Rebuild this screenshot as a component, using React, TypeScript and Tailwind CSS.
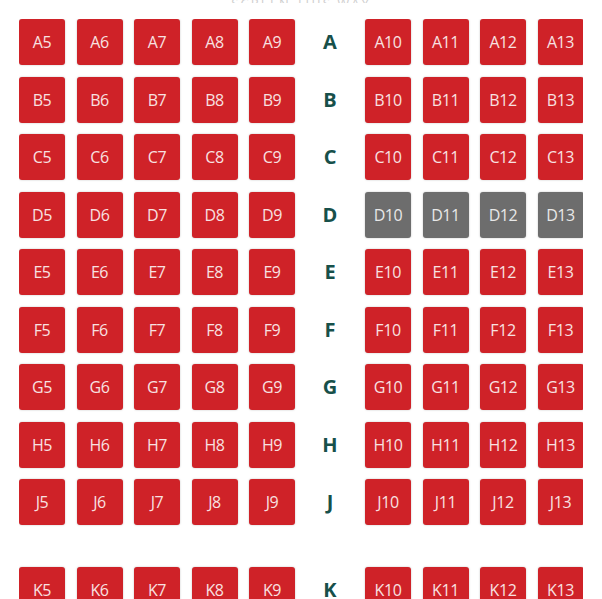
import React from "react";

const rows = ["A", "B", "C", "D", "E", "F", "G", "H", "J"];
const leftCols = [5, 6, 7, 8, 9];
const rightCols = [10, 11, 12, 13];

const taken = ["D10", "D11", "D12", "D13"];

const Seat = ({ id }: { id: string }) => {
  const isTaken = taken.includes(id);
  return (
    <button
      className={`w-[46px] h-[46px] shrink-0 rounded-[3px] flex items-center justify-center text-[16px] font-medium tracking-tight shadow-[0_0_2px_rgba(0,0,0,0.25)] ${
        isTaken ? "bg-[#6d6d6d] text-[#e8e8e8]" : "bg-[#cf2228] text-[#f8e1e1]"
      }`}
    >
      {id}
    </button>
  );
};

const Row = ({ letter }: { letter: string }) => (
  <div className="flex gap-[11.5px] items-center">
    {leftCols.map((n) => (
      <Seat key={n} id={`${letter}${n}`} />
    ))}
    <div className="w-[47px] shrink-0 text-center text-[20px] font-bold text-[#17504a]">{letter}</div>
    {rightCols.map((n) => (
      <Seat key={n} id={`${letter}${n}`} />
    ))}
  </div>
);

export default function App() {
  return (
    <div className="w-[602px] h-[599px] bg-white overflow-hidden" style={{ fontFamily: '"Open Sans", sans-serif' }}>
      {/* screen label, mostly scrolled out */}
      <div className="h-[3px] overflow-hidden flex justify-center items-end">
        <span className="text-[13px] leading-none text-[#cfcfcf] tracking-[2px] translate-y-[7px]">SCREEN THIS WAY</span>
      </div>
      <div className="pl-[19px] pr-[19px] pt-[16px]">
        <div className="overflow-hidden flex flex-col gap-[11.5px]">
          {rows.map((r) => (
            <Row key={r} letter={r} />
          ))}
          <div className="h-[19px]" />
          <Row letter="K" />
        </div>
      </div>
    </div>
  );
}
